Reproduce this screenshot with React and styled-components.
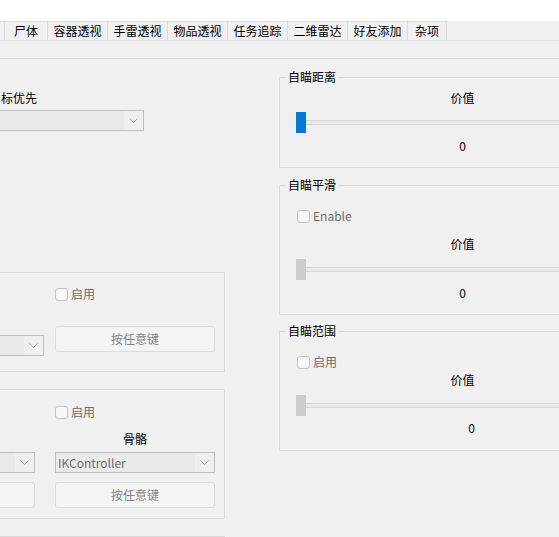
import React from 'react'
import styled, { createGlobalStyle } from 'styled-components'

const GlobalStyle = createGlobalStyle`
html, body {
  margin: 0;
  padding: 0;
  background: #f0f0f0;
}
body {
  font-family: "Noto Sans CJK SC", "Noto Sans", sans-serif;
  font-size: 12px;
  line-height: 16px;
  color: #000;
  overflow: hidden;
}
`

const Page = styled.div`
width: 559px;
height: 537px;
overflow: hidden;
background: #f0f0f0;
`

const TopStrip = styled.div`
height: 21px;
background: #fff;
`

const TabBar = styled.div`
display: flex;
height: 20px;
box-sizing: border-box;
border-bottom: 1px solid #e2e2e2;
`

const Tab = styled.div`
width: ${p => p.$w}px;
height: 19px;
box-sizing: border-box;
padding-top: 1px;
border-top: 1px solid #dadada;
border-right: 1px solid #dadada;
text-align: center;
white-space: nowrap;
overflow: hidden;
`

const Frame = styled.div`
margin-top: 17px;
border-top: 1px solid #d9d9d9;
`

const Columns = styled.div`
display: grid;
grid-template-columns: 325px 367px;
column-gap: 54px;
margin-left: -100px;
align-items: start;
`

const LeftCol = styled.div`
display: flex;
flex-direction: column;
`

const RightCol = styled.div`
display: flex;
flex-direction: column;
`

const FieldLabel = styled.div`
margin: ${p => p.$mt || 0}px 0 0 ${p => p.$ml || 0}px;
color: ${p => p.$color || '#000'};
text-align: ${p => p.$align || 'left'};
white-space: nowrap;
`

const Combo = styled.div`
display: flex;
height: 21px;
box-sizing: border-box;
margin: ${p => p.$mt || 0}px 0 0 ${p => p.$ml || 0}px;
width: ${p => (p.$w ? `${p.$w}px` : 'auto')};
border: 1px solid #bebebe;
background: #eaeaea;
`

const ComboText = styled.div`
flex: 1;
padding-left: 2px;
line-height: 19px;
color: #6d6d6d;
white-space: nowrap;
overflow: hidden;
`

const ComboArrow = styled.div`
width: 19px;
display: flex;
align-items: center;
justify-content: center;
background: #efefef;
`

const Button = styled.div`
height: 26px;
box-sizing: border-box;
margin-top: ${p => p.$mt || 0}px;
border: 1px solid #dcdcdc;
border-radius: 3px;
background: #f4f4f4;
color: #838383;
line-height: 24px;
text-align: center;
`

const Group = styled.div`
display: grid;
grid-template-columns: 1fr 160px;
column-gap: ${p => p.$gap}px;
height: ${p => p.$h}px;
margin-top: ${p => p.$mt}px;
box-sizing: border-box;
padding: 0 9px 0 10px;
border: 1px solid #dadada;
`

const SubCol = styled.div`
display: flex;
flex-direction: column;
`

const CheckRow = styled.div`
display: flex;
align-items: center;
gap: 3px;
height: 16px;
margin-top: ${p => p.$mt || 0}px;
padding-left: ${p => p.$indent || 0}px;
color: #6d6d6d;
white-space: nowrap;
`

const CheckBox = styled.span`
width: 13px;
height: 13px;
box-sizing: border-box;
border: 1px solid #c4c4c4;
border-radius: 3px;
background: #f7f7f7;
`

const Box = styled.fieldset`
margin: ${p => p.$mt}px 0 0;
padding: 0 6px ${p => p.$pb}px;
width: 367px;
min-width: 0;
box-sizing: border-box;
border: 1px solid #dadada;
`

const BoxTitle = styled.legend`
padding: 0 2px;
line-height: 16px;
`

const BoxBody = styled.div`
display: flex;
flex-direction: column;
padding: ${p => p.$pt}px 10px 0;
`

const Slider = styled.div`
display: flex;
align-items: center;
height: 21px;
margin-top: ${p => p.$mt}px;
`

const Thumb = styled.div`
width: 10px;
height: 21px;
background: ${p => (p.$active ? '#0078d7' : '#cccccc')};
`

const Track = styled.div`
flex: 1;
height: 5px;
box-sizing: border-box;
border-top: 1px solid #d6d6d6;
border-bottom: 1px solid #d6d6d6;
background: #e7eaea;
`

const ValueNum = styled.div`
margin-top: ${p => p.$mt}px;
padding-left: ${p => p.$shift || 0}px;
text-align: center;
`

const Chevron = () => (
    <svg width="9" height="5" viewBox="0 0 9 5">
        <path d="M0.5 0.5 L4.5 4.5 L8.5 0.5" fill="none" stroke="#a9a9a9" strokeWidth="1" />
    </svg>
)

const Select = ({ value, ...rest }) => (
    <Combo {...rest}>
        <ComboText>{value}</ComboText>
        <ComboArrow><Chevron /></ComboArrow>
    </Combo>
)

const Check = ({ label, ...rest }) => (
    <CheckRow {...rest}>
        <CheckBox />
        {label}
    </CheckRow>
)

const tabs = [
    { label: '', w: 5 },
    { label: '尸体', w: 43 },
    { label: '容器透视', w: 60 },
    { label: '手雷透视', w: 60 },
    { label: '物品透视', w: 60 },
    { label: '任务追踪', w: 60 },
    { label: '二维雷达', w: 60 },
    { label: '好友添加', w: 60 },
    { label: '杂项', w: 39 },
]

export default function App() {
    return (
        <Page>
            <GlobalStyle />
            <TopStrip />
            <TabBar>
                {tabs.map((tab, index) => <Tab key={index.toString()} $w={tab.w}>{tab.label}</Tab>)}
            </TabBar>
            <Frame>
                <Columns>
                    <LeftCol>
                        <FieldLabel $mt={31} $ml={101}>标优先</FieldLabel>
                        <Select value="" $mt={4} $ml={10} $w={234} />

                        <Group $mt={141} $h={100} $gap={11}>
                            <SubCol>
                                <Select value="" $mt={62} />
                            </SubCol>
                            <SubCol>
                                <Check label="启用" $mt={13} />
                                <Button $mt={24}>按任意键</Button>
                            </SubCol>
                        </Group>

                        <Group $mt={17} $h={130} $gap={20}>
                            <SubCol>
                                <Select value="" $mt={62} />
                                <Button $mt={9} />
                            </SubCol>
                            <SubCol>
                                <Check label="启用" $mt={14} />
                                <FieldLabel $mt={11} $align="center">骨骼</FieldLabel>
                                <Select value="IKController" $mt={5} />
                                <Button $mt={9}>按任意键</Button>
                            </SubCol>
                        </Group>

                        <Group $mt={17} $h={100} $gap={20} />
                    </LeftCol>

                    <RightCol>
                        <Box $mt={10} $pb={13}>
                            <BoxTitle>自瞄距离</BoxTitle>
                            <BoxBody $pt={5}>
                                <FieldLabel $align="center">价值</FieldLabel>
                                <Slider $mt={6}><Thumb $active /><Track /></Slider>
                                <ValueNum $mt={5}>0</ValueNum>
                            </BoxBody>
                        </Box>

                        <Box $mt={9} $pb={13}>
                            <BoxTitle>自瞄平滑</BoxTitle>
                            <BoxBody $pt={15}>
                                <Check label="Enable" $indent={1} />
                                <FieldLabel $mt={12} $align="center">价值</FieldLabel>
                                <Slider $mt={7}><Thumb /><Track /></Slider>
                                <ValueNum $mt={5}>0</ValueNum>
                            </BoxBody>
                        </Box>

                        <Box $mt={8} $pb={14}>
                            <BoxTitle>自瞄范围</BoxTitle>
                            <BoxBody $pt={15}>
                                <Check label="启用" $indent={1} />
                                <FieldLabel $mt={2} $align="center">价值</FieldLabel>
                                <Slider $mt={7}><Thumb /><Track /></Slider>
                                <ValueNum $mt={4} $shift={18}>0</ValueNum>
                            </BoxBody>
                        </Box>
                    </RightCol>
                </Columns>
            </Frame>
        </Page>
    )
}
